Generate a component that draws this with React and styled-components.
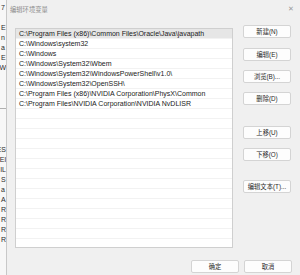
import React from 'react';
import styled, { createGlobalStyle } from 'styled-components';

const GlobalStyle = createGlobalStyle`
	html, body {
		margin: 0;
		padding: 0;
		background: #f0f0f0;
	}
	* {
		box-sizing: border-box;
	}
`;

const paths = [
	'C:\\Program Files (x86)\\Common Files\\Oracle\\Java\\javapath',
	'C:\\Windows\\system32',
	'C:\\Windows',
	'C:\\Windows\\System32\\Wbem',
	'C:\\Windows\\System32\\WindowsPowerShell\\v1.0\\',
	'C:\\Windows\\System32\\OpenSSH\\',
	'C:\\Program Files (x86)\\NVIDIA Corporation\\PhysX\\Common',
	'C:\\Program Files\\NVIDIA Corporation\\NVIDIA NvDLISR',
];

const TOTAL_ROWS = 22;

// letters of the window behind the dialog, clipped at its edge
const behindTop = ['7', '', 'E', 'n', 'a', 'E', 'W'];
const behindBottom = ['ES', 'El', 'IL', 'S', 'a', 'A', 'R', 'R', 'R', 'R'];

const sideButtons = [
	{ label: '新建(N)', gap: 0 },
	{ label: '编辑(E)', gap: 10 },
	{ label: '浏览(B)...', gap: 9 },
	{ label: '删除(D)', gap: 9 },
	{ label: '上移(U)', gap: 21 },
	{ label: '下移(O)', gap: 9 },
	{ label: '编辑文本(T)...', gap: 19 },
];

const App = () => {
	const rows = Array.from({ length: TOTAL_ROWS }, (_, i) => paths[i] || '');

	return (
		<>
			<GlobalStyle />
			<Screen>
				<BehindWindow>
					<BehindBlock>
						{behindTop.map((c, i) => (
							<BehindChar key={i}>{c}</BehindChar>
						))}
					</BehindBlock>
					<BehindDivider />
					<BehindBlock pad={36}>
						{behindBottom.map((c, i) => (
							<BehindChar key={i}>{c}</BehindChar>
						))}
					</BehindBlock>
				</BehindWindow>
				<Dialog>
					<TitleBar>
						<Title>编辑环境变量</Title>
						<Close>✕</Close>
					</TitleBar>
					<Body>
						<PathList>
							{rows.map((p, i) => (
								<Row key={i} selected={i === 0}>
									{p}
								</Row>
							))}
						</PathList>
						<ButtonColumn>
							{sideButtons.map((b) => (
								<Button key={b.label} gap={b.gap}>
									{b.label}
								</Button>
							))}
						</ButtonColumn>
					</Body>
					<Footer>
						<Button>确定</Button>
						<Button>取消</Button>
					</Footer>
				</Dialog>
			</Screen>
		</>
	);
};

const Screen = styled.div`
	width: 300px;
	height: 275px;
	display: flex;
	overflow: hidden;
	font-family: 'Liberation Sans', 'Noto Sans CJK SC', sans-serif;
	background: #f0f0f0;
`;

const BehindWindow = styled.div`
	width: 7px;
	flex-shrink: 0;
	display: flex;
	flex-direction: column;
	overflow: hidden;
	background: #f7f7f7;
	border-right: 1px solid #c8c8c8;
`;

const BehindBlock = styled.div`
	display: flex;
	flex-direction: column;
	padding-top: ${(props) => props.pad || 3}px;
`;

const BehindChar = styled.div`
	height: 10px;
	line-height: 10px;
	font-size: 7px;
	color: #2a2a2a;
	white-space: nowrap;
	direction: rtl;
	text-align: left;
	padding-left: 1px;
`;

const BehindDivider = styled.div`
	margin-top: 35px;
	height: 1px;
	background: #b0b0b0;
`;

const Dialog = styled.div`
	flex: 1;
	display: flex;
	flex-direction: column;
	background: #f0f0f0;
`;

const TitleBar = styled.div`
	height: 16px;
	display: flex;
	align-items: center;
	justify-content: space-between;
	padding: 2px 6px 0 3px;
`;

const Title = styled.div`
	font-size: 6.3px;
	color: #8c8c8c;
`;

const Close = styled.div`
	font-size: 7px;
	color: #9a9a9a;
`;

const Body = styled.div`
	display: flex;
	padding: 12px 0 0 8px;
	gap: 10px;
`;

const PathList = styled.div`
	width: 218px;
	height: 220px;
	background: #ffffff;
	border: 1px solid #cfcfcf;
	display: flex;
	flex-direction: column;
	overflow: hidden;
`;

const Row = styled.div`
	height: 10px;
	flex-shrink: 0;
	line-height: 9px;
	font-size: 7px;
	color: #1a1a1a;
	padding-left: 3px;
	white-space: nowrap;
	background: ${(props) => (props.selected ? '#e6e6e6' : '#ffffff')};
	border-bottom: 1px solid #f2f2f2;
`;

const ButtonColumn = styled.div`
	display: flex;
	flex-direction: column;
	padding-top: -3px;
	margin-top: -3px;
`;

const Button = styled.div`
	width: 48px;
	height: 13px;
	margin-top: ${(props) => props.gap || 0}px;
	display: flex;
	align-items: center;
	justify-content: center;
	background: #fdfdfd;
	border: 1px solid #d4d4d4;
	border-radius: 2px;
	font-size: 6.3px;
	color: #2b2b2b;
	white-space: nowrap;
`;

const Footer = styled.div`
	display: flex;
	justify-content: flex-end;
	gap: 5px;
	padding: 12px 8px 0 0;
`;

export default App;
